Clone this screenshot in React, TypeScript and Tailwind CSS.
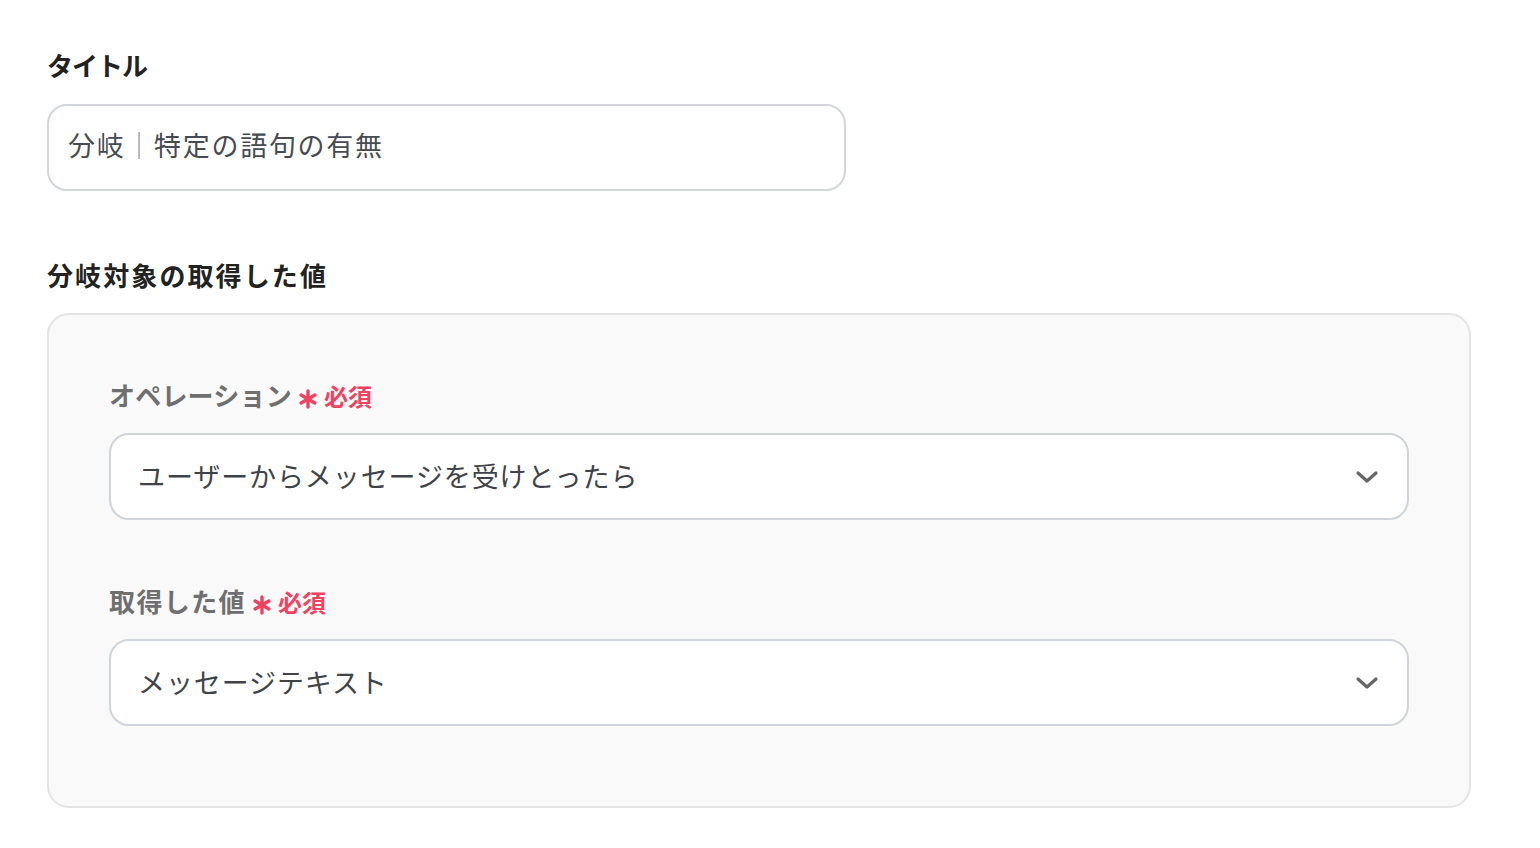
import { ReactNode } from 'react';

const font = { fontFamily: '"Noto Sans CJK JP", "Noto Sans", sans-serif' };

function Chevron() {
  return (
    <svg width="24" height="14" viewBox="0 0 24 14" fill="none" className="shrink-0">
      <path d="M3 3l9 8 9-8" stroke="#666" strokeWidth="3.2" strokeLinecap="round" strokeLinejoin="round" />
    </svg>
  );
}

function Asterisk() {
  return (
    <svg width="20" height="20" viewBox="0 0 20 20" className="ml-[6px] mt-[8px] shrink-0">
      <g stroke="#f0415e" strokeWidth="3.4" strokeLinecap="round">
        <path d="M10 2v16" />
        <path d="M3.1 6l13.8 8" />
        <path d="M3.1 14l13.8-8" />
      </g>
    </svg>
  );
}

function Required({ label, spacing }: { label: string; spacing: string }) {
  return (
    <div className="flex items-center h-[40px]">
      <span className={`text-[26px] font-bold text-[#6f6f6f] leading-[40px] ${spacing}`}>{label}</span>
      <Asterisk />
      <span className="ml-[6px] mt-[2px] text-[24px] font-bold text-[#f0415e] leading-[40px]">必須</span>
    </div>
  );
}

function Select({ value }: { value: string }) {
  return (
    <div className="mt-[18px] h-[87px] flex items-center justify-between bg-white border-2 border-[#cfd4da] rounded-[20px] pl-[27px] pr-[28px]">
      <span className="text-[27px] text-[#3e4349] tracking-[0.9px]">{value}</span>
      <Chevron />
    </div>
  );
}

function Field({ label, spacing, children }: { label: string; spacing: string; children: ReactNode }) {
  return (
    <div>
      <Required label={label} spacing={spacing} />
      {children}
    </div>
  );
}

export default function App() {
  return (
    <div className="min-h-screen bg-white pl-[47px] pr-[70px] pt-[45px]" style={font}>
      <h2 className="text-[26px] font-bold text-[#222] leading-[40px] tracking-[-1px]">タイトル</h2>
      <div className="mt-[19px] w-[799px] h-[87px] flex items-center border-2 border-[#d2d6db] rounded-[20px] pl-[19px] pb-[5px]">
        <span className="text-[27px] text-[#464b52] tracking-[1.7px]">
          分岐<span className="text-[#8a8f96]">｜</span>特定の語句の有無
        </span>
      </div>

      <h2 className="mt-[64px] text-[26px] font-bold text-[#222] leading-[40px] tracking-[2.1px]">分岐対象の取得した値</h2>
      <div className="mt-[18px] w-[1424px] bg-[#f9f9f9] border-2 border-[#e4e4e4] rounded-[22px] px-[60px] pt-[60px] pb-[80px] flex flex-col gap-[61px]">
        <Field label="オペレーション" spacing="tracking-[0.2px]">
          <Select value="ユーザーからメッセージを受けとったら" />
        </Field>
        <Field label="取得した値" spacing="tracking-[1.4px]">
          <Select value="メッセージテキスト" />
        </Field>
      </div>
    </div>
  );
}
